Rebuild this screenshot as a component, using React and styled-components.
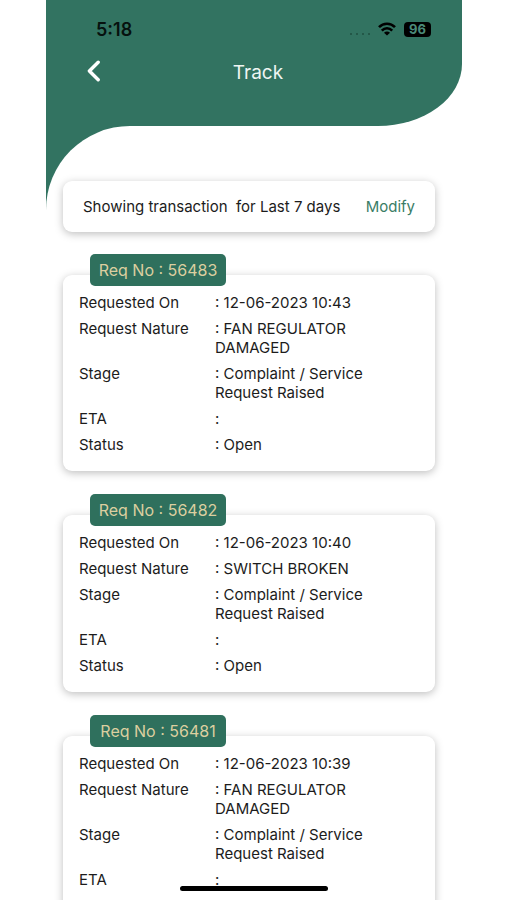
import styled, { createGlobalStyle } from 'styled-components';

const requests = [
    { no: '56483', date: '12-06-2023 10:43', nature: 'FAN REGULATOR DAMAGED', stage: 'Complaint / Service Request Raised', eta: '', status: 'Open' },
    { no: '56482', date: '12-06-2023 10:40', nature: 'SWITCH BROKEN', stage: 'Complaint / Service Request Raised', eta: '', status: 'Open' },
    { no: '56481', date: '12-06-2023 10:39', nature: 'FAN REGULATOR DAMAGED', stage: 'Complaint / Service Request Raised', eta: '', status: 'Open' },
];

function StatusBar(){
    return(
        <StatusRow>
            <Time>5:18</Time>
            <StatusIcons>
                <Dots><i /><i /><i /><i /></Dots>
                <svg width="18" height="14" viewBox="0 0 18 14" aria-hidden="true">
                    <g fill="none" stroke="#000" strokeWidth="2.6">
                        <path d="M1 5.2C5.4 0.5 12.6 0.5 17 5.2" />
                        <path d="M3.8 8.6C6.8 5.5 11.2 5.5 14.2 8.6" />
                    </g>
                    <path d="M9 13.6L6 10.7C7.6 9.2 10.4 9.2 12 10.7Z" />
                </svg>
                <Battery>96</Battery>
            </StatusIcons>
        </StatusRow>
    )
}

function Request({ request }){
    return(
        <RequestItem>
            <Tag>Req No : {request.no}</Tag>
            <Card>
                <Details>
                    <dt>Requested On</dt>
                    <dd>: {request.date}</dd>
                    <dt>Request Nature</dt>
                    <dd>: {request.nature}</dd>
                    <dt>Stage</dt>
                    <dd>: {request.stage}</dd>
                    <dt>ETA</dt>
                    <dd>: {request.eta}</dd>
                    <dt>Status</dt>
                    <dd>: {request.status}</dd>
                </Details>
            </Card>
        </RequestItem>
    )
}

function App(){
    return(
        <Screen>
            <GlobalStyle />
            <Header>
                <StatusBar />
                <NavBar>
                    <BackButton type="button" aria-label="Back">
                        <svg width="14" height="22" viewBox="0 0 14 22" aria-hidden="true">
                            <path d="M11.2 2.2L2.4 11L11.2 19.8" fill="none" stroke="#fff" strokeWidth="3.4" strokeLinecap="round" strokeLinejoin="round" />
                        </svg>
                    </BackButton>
                    <Title>Track</Title>
                </NavBar>
            </Header>
            <Sheet>
                <Content>
                    <Filter>
                        <span>{'Showing transaction  for Last 7 days'}</span>
                        <ModifyButton type="button">Modify</ModifyButton>
                    </Filter>
                    <RequestList>
                        {requests.map((request) => (
                            <Request key={request.no} request={request} />
                        ))}
                    </RequestList>
                </Content>
            </Sheet>
            <HomeIndicator />
        </Screen>
    )
}

export default App

const GlobalStyle = createGlobalStyle`
*{
    box-sizing: border-box;
}
body{
    margin: 0;
    background-color: white;
    color: #1c1c1c;
    font-family: Inter, "Liberation Sans", sans-serif;
    font-size: 15px;
    line-height: 19px;
}
button{
    border: 0;
    padding: 0;
    background: none;
    font: inherit;
    cursor: pointer;
}
`

const Screen = styled.div`
    position: relative;
    display: flex;
    flex-direction: column;
    height: 100vh;
    margin: 0 45px 0 46px;
`

const Header = styled.header`
    flex-shrink: 0;
    padding: 18px 0 36px;
    background-color: #327361;
    border-bottom-right-radius: 84px 62px;
`

const StatusRow = styled.div`
    display: flex;
    align-items: center;
    justify-content: space-between;
    height: 22px;
    padding: 0 31px 0 50px;
    color: #06110e;
`

const Time = styled.div`
    font-size: 18px;
    font-weight: 600;
`

const StatusIcons = styled.div`
    display: flex;
    align-items: center;
    gap: 8px;
`

const Dots = styled.div`
    display: flex;
    gap: 4px;
    padding-top: 9px;
    i{
        width: 2px;
        height: 2px;
        border-radius: 50%;
        background-color: #1f4f41;
    }
`

const Battery = styled.div`
    width: 27px;
    height: 15px;
    border-radius: 4px;
    background-color: black;
    color: #4b8b79;
    font-size: 13px;
    font-weight: 700;
    line-height: 15px;
    text-align: center;
`

const NavBar = styled.div`
    display: grid;
    grid-template-columns: 24px 1fr 24px;
    align-items: center;
    height: 50px;
    padding: 16px 28px 0 36px;
`

const BackButton = styled.button`
    display: flex;
    align-items: center;
    justify-content: center;
    height: 28px;
    padding-bottom: 4px;
`

const Title = styled.h1`
    margin: 0;
    color: #eef5f2;
    font-size: 19px;
    font-weight: 400;
    line-height: 32px;
    text-align: center;
`

const Sheet = styled.main`
    flex: 1;
    min-height: 0;
    background-color: #327361;
`

const Content = styled.div`
    height: 100%;
    padding: 55px 27px 40px 17px;
    overflow-y: auto;
    scrollbar-width: none;
    background-color: white;
    border-top-left-radius: 84px;
`

const Card = styled.div`
    border-radius: 9px;
    background-color: white;
    box-shadow: 0 2px 9px rgba(0, 0, 0, 0.26);
`

const Filter = styled(Card)`
    display: flex;
    align-items: center;
    justify-content: space-between;
    padding: 16px 20px;
    white-space: pre-wrap;
`

const ModifyButton = styled.button`
    color: #3a7d66;
`

const RequestList = styled.ul`
    display: flex;
    flex-direction: column;
    gap: 23px;
    margin: 0;
    padding: 22px 0 0;
    list-style: none;
`

const RequestItem = styled.li`
    ${Card}{
        margin-top: -11px;
        padding: 18px 16px 17px;
    }
`

const Tag = styled.h2`
    position: relative;
    width: fit-content;
    min-width: 136px;
    margin: 0 0 0 27px;
    padding: 6px 8px;
    border-radius: 5px;
    background-color: #2f705d;
    color: #dccfa0;
    font-size: 16px;
    font-weight: 400;
    line-height: 20px;
    text-align: center;
`

const Details = styled.dl`
    display: grid;
    grid-template-columns: 2fr 3fr;
    row-gap: 7px;
    margin: 0;
    dt, dd{
        margin: 0;
    }
    dd{
        padding-right: 32px;
    }
`

const HomeIndicator = styled.div`
    position: absolute;
    bottom: 9px;
    left: 50%;
    width: 148px;
    height: 5px;
    border-radius: 3px;
    background-color: black;
    transform: translateX(-50%);
`
